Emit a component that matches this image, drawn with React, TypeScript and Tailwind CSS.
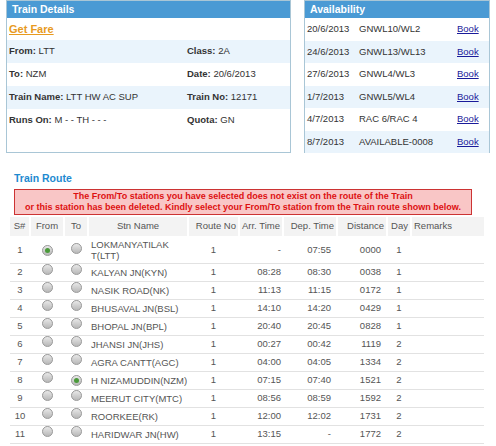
import React from "react";

const rows = [
  ["1", "LOKMANYATILAK T(LTT)", "1", "-", "07:55", "0000", "1", "from"],
  ["2", "KALYAN JN(KYN)", "1", "08:28", "08:30", "0038", "1", ""],
  ["3", "NASIK ROAD(NK)", "1", "11:13", "11:15", "0172", "1", ""],
  ["4", "BHUSAVAL JN(BSL)", "1", "14:10", "14:20", "0429", "1", ""],
  ["5", "BHOPAL JN(BPL)", "1", "20:40", "20:45", "0828", "1", ""],
  ["6", "JHANSI JN(JHS)", "1", "00:27", "00:42", "1119", "2", ""],
  ["7", "AGRA CANTT(AGC)", "1", "04:00", "04:05", "1334", "2", ""],
  ["8", "H NIZAMUDDIN(NZM)", "1", "07:15", "07:40", "1521", "2", "to"],
  ["9", "MEERUT CITY(MTC)", "1", "08:56", "08:59", "1592", "2", ""],
  ["10", "ROORKEE(RK)", "1", "12:00", "12:02", "1731", "2", ""],
  ["11", "HARIDWAR JN(HW)", "1", "13:15", "-", "1772", "2", ""],
];

function Radio({ on }: { on: boolean }) {
  return (
    <span className="inline-flex w-[11px] h-[11px] rounded-full border border-[#9a9a9a] bg-gradient-to-b from-[#e8e8e8] to-[#b8b8b8] items-center justify-center">
      {on && <span className="w-[5px] h-[5px] rounded-full bg-[#4a9a3a]" />}
    </span>
  );
}

export default function App() {
  const details = [
    ["From:", "LTT", "Class:", "2A"],
    ["To:", "NZM", "Date:", "20/6/2013"],
    ["Train Name:", "LTT HW AC SUP", "Train No:", "12171"],
    ["Runs On:", "M - - TH - - -", "Quota:", "GN"],
  ];
  const avail = [
    ["20/6/2013", "GNWL10/WL2"],
    ["24/6/2013", "GNWL13/WL13"],
    ["27/6/2013", "GNWL4/WL3"],
    ["1/7/2013", "GNWL5/WL4"],
    ["4/7/2013", "RAC 6/RAC 4"],
    ["8/7/2013", "AVAILABLE-0008"],
  ];
  return (
    <div className="w-[496px] h-[446px] bg-white overflow-hidden text-[9.5px] text-[#333]" style={{ fontFamily: "'Liberation Sans', Arial, sans-serif" }}>
      <div className="flex gap-[13px] pl-[6px]">
        <div className="w-[285px] h-[153px] border border-[#a9c6d6]">
          <div className="h-[17px] bg-[#4a9ad4] text-white font-bold text-[10.5px] px-[5px] leading-[17px]">Train Details</div>
          <div className="h-[22px] px-[2px] flex items-center">
            <span className="text-[#e89a1e] font-bold underline text-[11px]">Get Fare</span>
          </div>
          {details.map((d, i) => (
            <div key={i} className={`h-[23px] flex items-center px-[2px] ${i % 2 === 0 ? "bg-[#eaf4fc]" : ""}`}>
              <div className="w-[178px]"><b>{d[0]}</b> {d[1]}</div>
              <div><b>{d[2]}</b> {d[3]}</div>
            </div>
          ))}
        </div>
        <div className="w[186px] w-[186px] h-[153px] border border-[#a9c6d6]">
          <div className="h-[17px] bg-[#4a9ad4] text-white font-bold text-[10.5px] px-[5px] leading-[17px]">Availability</div>
          {avail.map((a, i) => (
            <div key={i} className={`h-[22.5px] flex items-center px-[2px] ${i % 2 === 1 ? "bg-[#eaf4fc]" : ""}`}>
              <div className="w-[52px]">{a[0]}</div>
              <div className="w-[98px]">{a[1]}</div>
              <span className="text-[#1a1a9a] underline">Book</span>
            </div>
          ))}
        </div>
      </div>
      <div className="pl-[14px] pt-[19px] pr-[24px]">
        <div className="text-[#1e8ad0] font-bold text-[10.5px] leading-[13px]">Train Route</div>
        <div className="mt-[4px] border border-[#c33] bg-[#f9c6c6] text-[#d11] font-bold text-[9px] text-center leading-[11px] py-[1px]">
          The From/To stations you have selected does not exist on the route of the Train<br />
          or this station has been deleted. Kindly select your From/To station from the Train route shown below.
        </div>
        <table className="w-[474px] -ml-[4px] border-collapse text-[#555] text-[9.5px]">
          <thead>
            <tr className="h-[21px] bg-[#f3f3f3] border-y-2 border-white">
              <th className="font-normal w-[20px] border-r-2 border-white">S#</th>
              <th className="font-normal w-[34px] border-r-2 border-white">From</th>
              <th className="font-normal w-[24px] border-r-2 border-white">To</th>
              <th className="font-normal w-[100px] border-r-2 border-white">Stn Name</th>
              <th className="font-normal w-[51px] text-right pr-[2px] border-r-2 border-white">Route No</th>
              <th className="font-normal w-[44px] text-right pr-[2px] border-r-2 border-white">Arr. Time</th>
              <th className="font-normal w-[54px] text-right pr-[2px] border-r-2 border-white">Dep. Time</th>
              <th className="font-normal w-[50px] text-right pr-[2px] border-r-2 border-white">Distance</th>
              <th className="font-normal w-[24px] text-right pr-[2px] border-r-2 border-white">Day</th>
              <th className="font-normal text-left pl-[2px]">Remarks</th>
            </tr>
          </thead>
          <tbody>
            {rows.map((r, i) => (
              <tr key={i} className={`border-b border-[#e2e2e2] ${i === 0 ? "h-[26px]" : "h-[18px]"}`}>
                <td className="text-center">{r[0]}</td>
                <td className="text-center"><Radio on={r[7] === "from"} /></td>
                <td className="text-center"><Radio on={r[7] === "to"} /></td>
                <td className="pl-[3px] leading-[11px]">{i === 0 ? <>LOKMANYATILAK<br />T(LTT)</> : r[1]}</td>
                <td className="text-center">{r[2]}</td>
                <td className="text-right pr-[2px]">{r[3]}</td>
                <td className="text-right pr-[6px]">{r[4]}</td>
                <td className="text-right pr-[6px]">{r[5]}</td>
                <td className="text-center">{r[6]}</td>
                <td></td>
              </tr>
            ))}
          </tbody>
        </table>
      </div>
    </div>
  );
}
